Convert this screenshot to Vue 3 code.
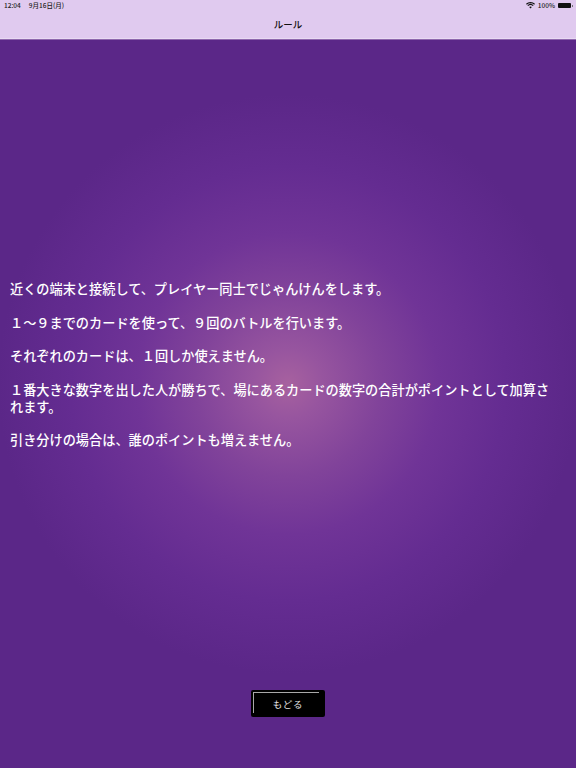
<template>
  <div class="screen">
    <header class="nav">
      <div class="status">
        <div class="status-left"><span>12:04</span><span>9月16日(月)</span></div>
        <div class="status-right">
          <svg class="wifi" viewBox="0 0 16 12" width="9" height="7"><path d="M8 11.5 5.6 8.8a3.4 3.4 0 0 1 4.8 0ZM3.9 7.1 2.5 5.5a7.9 7.9 0 0 1 11 0l-1.4 1.6a5.8 5.8 0 0 0-8.2 0ZM1.5 4.5 0 3a11.6 11.6 0 0 1 16 0l-1.5 1.5a9.4 9.4 0 0 0-13 0Z" fill="#111"/></svg>
          <span>100%</span>
          <span class="battery"></span>
        </div>
      </div>
      <div class="title">ルール</div>
    </header>
    <main class="content">
      <div class="rules">
        <p v-for="(rule, i) in rules" :key="i">{{ rule }}</p>
      </div>
      <div class="actions"><button class="back">もどる</button></div>
    </main>
  </div>
</template>

<script setup>
const rules = [
  '近くの端末と接続して、プレイヤー同士でじゃんけんをします。',
  '１〜９までのカードを使って、９回のバトルを行います。',
  'それぞれのカードは、１回しか使えません。',
  '１番大きな数字を出した人が勝ちで、場にあるカードの数字の合計がポイントとして加算されます。',
  '引き分けの場合は、誰のポイントも増えません。'
]
</script>

<style>
html, body { margin: 0; padding: 0; background: #5a2787; }
</style>

<style scoped>
.screen {
  width: 576px;
  height: 768px;
  display: flex;
  flex-direction: column;
  overflow: hidden;
  font-family: "Noto Sans CJK JP", "Liberation Sans", sans-serif;
}
.nav {
  height: 40px;
  box-sizing: border-box;
  flex: none;
  background: #e0caef;
  border-bottom: 1px solid #8f68ae;
  box-shadow: inset 0 -1px 0 #e9daf3;
  display: flex;
  flex-direction: column;
  color: #111;
}
.status {
  height: 11px;
  padding: 0 4px;
  display: flex;
  justify-content: space-between;
  align-items: center;
  font-size: 6.5px;
  font-weight: 500;
  line-height: 11px;
  color: #222;
}
.status-left { display: flex; gap: 8px; }
.status-right { display: flex; align-items: center; gap: 3px; }
.wifi { display: block; }
.battery {
  width: 13px;
  height: 5px;
  display: block;
  position: relative;
  border-radius: 1px;
  background: #111;
  margin-right: 1px;
}
.battery::after {
  content: "";
  position: absolute;
  left: 13.5px;
  top: 1.5px;
  width: 1px;
  height: 2px;
  background: #777;
}
.title {
  flex: 1;
  display: flex;
  align-items: center;
  justify-content: center;
  font-size: 9.5px;
  font-weight: 500;
  padding-bottom: 2px;
}
.content {
  flex: 1;
  display: flex;
  flex-direction: column;
  background: radial-gradient(circle 290px at 288px 344px, #a7619f 0%, #97559f 12%, #81439a 32%, #703497 52%, #642c91 75%, #5b2788 100%);
}
.rules {
  padding: 240px 16px 0 10px;
  color: #fff;
  font-size: 13.18px;
  font-weight: 500;
  line-height: 17px;
  flex: 1;
}
.rules p { margin: 0 0 16.5px; }
.actions {
  display: flex;
  justify-content: center;
  padding-bottom: 51px;
}
.back {
  position: relative;
  width: 74px;
  height: 27px;
  background: #000;
  color: #e4e4e4;
  border: none;
  border-radius: 2px;
  font-family: inherit;
  font-size: 9.5px;
  letter-spacing: 0.8px;
  padding: 0;
}
.back::before {
  content: "";
  position: absolute;
  left: 2px;
  top: 2px;
  width: 65px;
  height: 20px;
  border-top: 1px solid #a8a8a8;
  border-left: 1px solid #a8a8a8;
}
</style>
